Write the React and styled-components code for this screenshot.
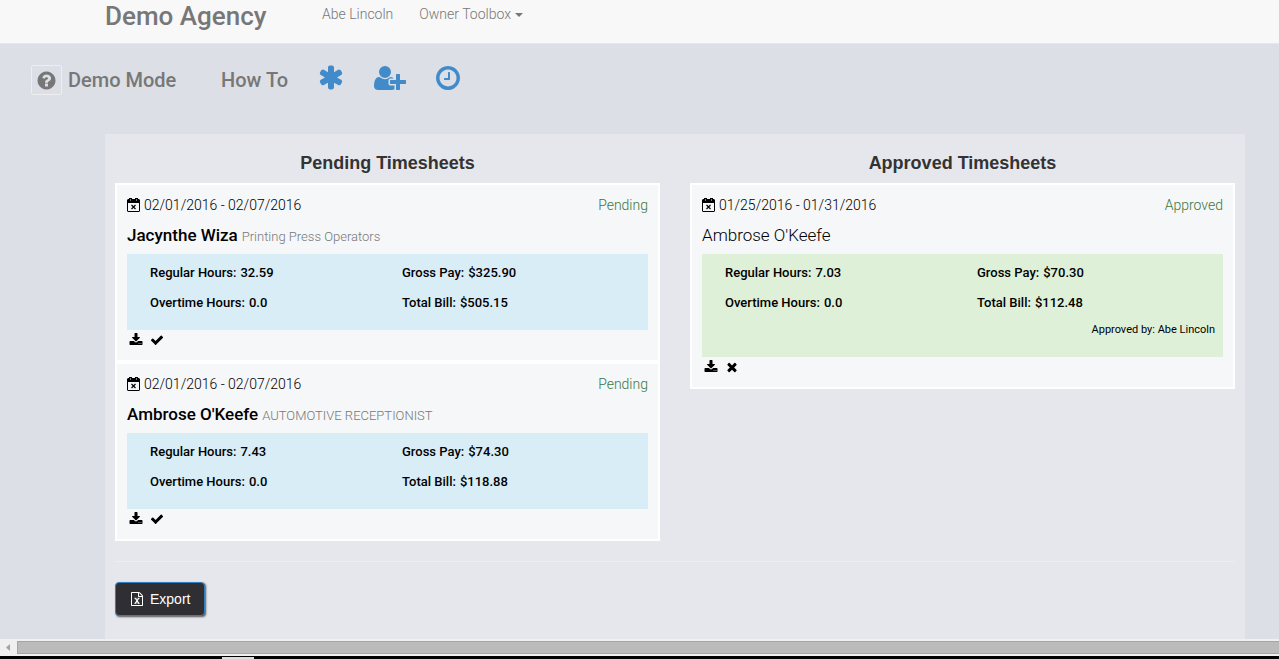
import React from "react";
import styled, { createGlobalStyle } from "styled-components";

const GlobalStyle = createGlobalStyle`
  *, *::before, *::after { box-sizing: border-box; }
  body {
    margin: 0;
    overflow: hidden;
    background: #dcdfe6;
    color: #000;
    font-family: Roboto, "Liberation Sans", sans-serif;
    font-size: 14px;
    line-height: 20px;
  }
  a { color: inherit; text-decoration: none; }
  button { font: inherit; color: inherit; cursor: pointer; }
  h1, h2, h3, p, dl, dd { margin: 0; }
`;

/* ---------- icons ---------- */

const Svg = styled.svg`
  display: block;
  flex: none;
  width: ${(p) => p.$w}px;
  height: ${(p) => p.$h}px;
  fill: currentColor;
`;

const RING =
  "zm384 192q0 209-103 385.5t-279.5 279.5-385.5 103-385.5-103-279.5-279.5-103-385.5 103-385.5 279.5-279.5 385.5-103 385.5 103 279.5 279.5 103 385.5z";

const paths = {
  question:
    "M1024 1376v-192q0-14-9-23t-23-9h-192q-14 0-23 9t-9 23v192q0 14 9 23t23 9h192q14 0 23-9t9-23zm256-672q0-88-55.5-163t-138.5-116-170-41q-243 0-371 213-15 24 8 42l132 100q7 6 19 6 16 0 25-12 53-68 86-92 34-24 86-24 48 0 85.5 26t37.5 59q0 38-20 61t-68 45q-63 28-115.5 86.5t-52.5 125.5v36q0 14 9 23t23 9h192q14 0 23-9t9-23q0-19 21.5-49.5t54.5-49.5q32-18 49-28.5t46-35 44.5-48 28-60.5 12.5-81" +
    RING,
  asterisk:
    "M1482 886q46 26 59.5 77.5t-12.5 97.5l-64 110q-26 46-77.5 59.5t-97.5-12.5l-266-153v307q0 52-38 90t-90 38h-128q-52 0-90-38t-38-90v-307l-266 153q-46 26-97.5 12.5t-77.5-59.5l-64-110q-26-46-12.5-97.5t59.5-77.5l266-154-266-154q-46-26-59.5-77.5t12.5-97.5l64-110q26-46 77.5-59.5t97.5 12.5l266 153v-307q0-52 38-90t90-38h128q52 0 90 38t38 90v307l266-153q46-26 97.5-12.5t77.5 59.5l64 110q26 46 12.5 97.5t-59.5 77.5l-266 154z",
  userPlus:
    "M704 896q-159 0-271.5-112.5t-112.5-271.5 112.5-271.5 271.5-112.5 271.5 112.5 112.5 271.5-112.5 271.5-271.5 112.5zm960 128h352q13 0 22.5 9.5t9.5 22.5v192q0 13-9.5 22.5t-22.5 9.5h-352v352q0 13-9.5 22.5t-22.5 9.5h-192q-13 0-22.5-9.5t-9.5-22.5v-352h-352q-13 0-22.5-9.5t-9.5-22.5v-192q0-13 9.5-22.5t22.5-9.5h352v-352q0-13 9.5-22.5t22.5-9.5h192q13 0 22.5 9.5t9.5 22.5v352zm-736 224q0 52 38 90t90 38h256v238q-68 50-171 50h-874q-121 0-194-69t-73-190q0-53 3.5-103.5t14-109 26.5-108.5 43-97.5 62-81 85.5-53.5 111.5-20q19 0 39 17 79 61 154.5 91.5t164.5 30.5 164.5-30.5 154.5-91.5q20-17 39-17 132 0 217 96h-223q-52 0-90 38t-38 90v192z",
  clock:
    "M1024 544v448q0 14-9 23t-23 9h-320q-14 0-23-9t-9-23v-64q0-14 9-23t23-9h224v-352q0-14 9-23t23-9h64q14 0 23 9t9 23zm416 352q0-148-73-273t-198-198-273-73-273 73-198 198-73 273 73 273 198 198 273 73 273-73 198-198 73-273zm224 0q0 209-103 385.5t-279.5 279.5-385.5 103-385.5-103-279.5-279.5-103-385.5 103-385.5 279.5-279.5 385.5-103 385.5 103 279.5 279.5 103 385.5z",
  download:
    "M1344 1344q0-26-19-45t-45-19-45 19-19 45 19 45 45 19 45-19 19-45zm256 0q0-26-19-45t-45-19-45 19-19 45 19 45 45 19 45-19 19-45zm128-224v320q0 40-28 68t-68 28h-1472q-40 0-68-28t-28-68v-320q0-40 28-68t68-28h465l135 136q58 56 136 56t136-56l136-136h464q40 0 68 28t28 68zm-325-569q17 41-14 70l-448 448q-18 19-45 19t-45-19l-448-448q-31-29-14-70 17-39 59-39h256v-448q0-26 19-45t45-19h256q26 0 45 19t19 45v448h256q42 0 59 39z",
  check:
    "M1671 566q0 40-28 68l-724 724-136 136q-28 28-68 28t-68-28l-136-136-362-362q-28-28-28-68t28-68l136-136q28-28 68-28t68 28l294 295 656-657q28-28 68-28t68 28l136 136q28 28 28 68z",
  times:
    "M1490 1322q0 40-28 68l-136 136q-28 28-68 28t-68-28l-294-294-294 294q-28 28-68 28t-68-28l-136-136q-28-28-28-68t28-68l294-294-294-294q-28-28-28-68t28-68l136-136q28-28 68-28t68 28l294 294 294-294q28-28 68-28t68 28l136 136q28 28 28 68t-28 68l-294 294 294 294q28 28 28 68z",
};

function Icon({ name, size }) {
  const box = name === "userPlus" ? 2048 : 1792;
  const top = name === "asterisk" ? -128 : 0;
  return (
    <Svg $w={Math.round((size * box) / 1792)} $h={size} viewBox={`0 ${top} ${box} 1792`} aria-hidden="true">
      <path d={paths[name]} />
    </Svg>
  );
}

function CalendarIcon() {
  return (
    <Svg $w={14} $h={14} viewBox="0 0 14 14" aria-hidden="true">
      <path fillRule="evenodd" d="M1 1h11l1 1v11l-1 1H1l-1-1V2zM1 5v8h11V5z" />
      <path d="M2 0h3v3H2zM8 0h3v3H8z" />
      <path d="M3 1h1v2H3zM9 1h1v2H9z" fill="#f5f7f9" fillOpacity="0.5" />
      <path d="M4.500 7l4 4M8.500 7l-4 4" stroke="currentColor" strokeWidth="1.200" />
    </Svg>
  );
}

function ExcelIcon() {
  return (
    <Svg $w={14} $h={14} viewBox="0 0 1792 1792" aria-hidden="true">
      <path d="M1596 380q28 28 48 76t20 88v1152q0 40-28 68t-68 28h-1344q-40 0-68-28t-28-68v-1600q0-40 28-68t68-28h896q40 0 88 20t76 48zm-444-244v376h376q-10-29-22-41l-313-313q-12-12-41-22zm384 1528v-1024h-416q-40 0-68-28t-28-68v-416h-768v1536h1280z" />
      <path d="M560 800h260M980 800h260M560 1450h260M980 1450h260" stroke="currentColor" strokeWidth="110" />
      <path d="M690 800l430 650M1110 800l-430 650" stroke="currentColor" strokeWidth="170" />
    </Svg>
  );
}

/* ---------- page frame ---------- */

const Page = styled.div`
  display: flex;
  flex-direction: column;
  height: 100vh;
`;

const Navbar = styled.nav`
  display: flex;
  align-items: flex-start;
  flex: none;
  height: 44px;
  padding-left: 105px;
  background: #f8f8f8;
  border-bottom: 1px solid #e7e7e7;
  color: #777;
`;

const Brand = styled.a`
  width: 217px;
  font-size: 26px;
  line-height: 32px;
  font-weight: 500;
`;

const NavItems = styled.div`
  display: flex;
  gap: 26px;
  padding-top: 4px;
  font-weight: 300;
`;

const Dropdown = styled.button`
  display: flex;
  align-items: center;
  gap: 4px;
  padding: 0;
  border: 0;
  background: none;
  line-height: 20px;
`;

const Caret = styled.span`
  margin-top: 2px;
  border: 4px solid transparent;
  border-top-color: currentColor;
  border-bottom: 0;
`;

const Toolbar = styled.div`
  display: flex;
  align-items: center;
  flex: none;
  height: 72px;
  padding-left: 31px;
  color: #777;
  font-size: 20px;
  font-weight: 500;
`;

const HelpButton = styled.button`
  display: grid;
  place-items: center;
  width: 31px;
  height: 30px;
  padding: 0;
  margin-right: 6px;
  border: 1px solid #eee;
  border-radius: 2px;
  background: none;
`;

const ToolLabel = styled.a`
  width: ${(p) => p.$width}px;
`;

const ToolIcons = styled.div`
  display: flex;
  align-items: center;
  gap: 28px;
  padding-bottom: 4px;
  color: #428bca;
`;

const Main = styled.main`
  flex: 1;
  min-height: 0;
  overflow: hidden;
  padding: 18px 34px 0 105px;
`;

const Panel = styled.div`
  min-height: 100%;
  padding: 15px 10px;
  background: #e6e7ec;
`;

const Columns = styled.div`
  display: grid;
  grid-template-columns: 1fr 1fr;
  gap: 30px;
  align-items: start;
`;

const ColumnTitle = styled.h2`
  height: 34px;
  color: #333;
  font: bold 18px/28px "Liberation Sans", sans-serif;
  text-align: center;
`;

/* ---------- timesheet card ---------- */

const Card = styled.article`
  padding: 10px 10px 12px;
  border: 2px solid #fff;
  background: #f5f7f9;
`;

const CardTop = styled.div`
  display: flex;
  justify-content: space-between;
  font-weight: 300;
`;

const Period = styled.span`
  display: flex;
  align-items: center;
  gap: 3px;
`;

const Status = styled.span`
  color: #3c763d;
`;

const Person = styled.h3`
  display: flex;
  align-items: baseline;
  gap: 4px;
  height: 39px;
  font-size: 17px;
  line-height: 40px;
  font-weight: ${(p) => (p.$light ? 300 : 500)};
`;

const Job = styled.small`
  color: #777;
  font-size: 13px;
  font-weight: 300;
`;

const Summary = styled.div`
  padding: 4px 0 12px 23px;
  background: ${(p) => (p.$approved ? "#dff0d8" : "#d9edf7")};
`;

const Figures = styled.dl`
  display: grid;
  grid-template-columns: 1fr 1fr;
  column-gap: 6px;
  font-size: 13px;
  line-height: 30px;
  font-weight: 500;
`;

const Figure = styled.div`
  display: flex;
  gap: 4px;
`;

const ApprovedBy = styled.p`
  padding: 0 8px 3px 0;
  font-size: 11px;
  line-height: 24px;
  text-align: right;
`;

const Actions = styled.div`
  display: flex;
  gap: 7px;
  padding: 2px 2px 0;
`;

const IconButton = styled.button`
  display: block;
  height: 16px;
  padding: 0;
  border: 0;
  background: none;
`;

const Divider = styled.hr`
  margin: 20px 0;
  border: 0;
  border-top: 1px solid #eee;
`;

const ExportButton = styled.button`
  display: flex;
  align-items: center;
  gap: 6px;
  height: 34px;
  padding: 0 14px;
  border: 1px solid #357ebd;
  border-radius: 4px;
  background: #2f2f33;
  box-shadow: 1px 1px 2px #555;
  color: #fff;
  font: 14px/20px "Liberation Sans", sans-serif;
`;

/* ---------- window chrome under the page ---------- */

const ScrollTrack = styled.div`
  display: flex;
  align-items: center;
  flex: none;
  height: 17px;
  background: #f0f0f0;
`;

const ScrollArrow = styled.span`
  width: 17px;
  padding-left: 6px;
  color: #a3a3a3;
`;

const ScrollThumb = styled.div`
  flex: 1;
  height: 13px;
  border: 1px solid #a6a6a6;
  border-right: 0;
  background: #bbb;
`;

const Taskbar = styled.div`
  flex: none;
  height: 3px;
  padding: 1px 0 0 222px;
  background: #000;
`;

const TaskTab = styled.div`
  width: 32px;
  height: 2px;
  background: #ddd;
`;

const pending = [
  { period: "02/01/2016 - 02/07/2016", name: "Jacynthe Wiza", job: "Printing Press Operators", regular: "32.59", gross: "$325.90", overtime: "0.0", bill: "$505.15" },
  { period: "02/01/2016 - 02/07/2016", name: "Ambrose O'Keefe", job: "AUTOMOTIVE RECEPTIONIST", regular: "7.43", gross: "$74.30", overtime: "0.0", bill: "$118.88" },
];

const approved = [
  { period: "01/25/2016 - 01/31/2016", name: "Ambrose O'Keefe", regular: "7.03", gross: "$70.30", overtime: "0.0", bill: "$112.48", approvedBy: "Abe Lincoln" },
];

function Timesheet({ sheet }) {
  const isApproved = Boolean(sheet.approvedBy);
  const figures = [
    ["Regular Hours:", sheet.regular],
    ["Gross Pay:", sheet.gross],
    ["Overtime Hours:", sheet.overtime],
    ["Total Bill:", sheet.bill],
  ];
  return (
    <Card>
      <CardTop>
        <Period>
          <CalendarIcon />
          {sheet.period}
        </Period>
        <Status>{isApproved ? "Approved" : "Pending"}</Status>
      </CardTop>
      <Person $light={isApproved}>
        <a href="#profile">{sheet.name}</a>
        {sheet.job && <Job>{sheet.job}</Job>}
      </Person>
      <Summary $approved={isApproved}>
        <Figures>
          {figures.map(([label, value]) => (
            <Figure key={label}>
              <dt>{label}</dt>
              <dd>{value}</dd>
            </Figure>
          ))}
        </Figures>
        {isApproved && <ApprovedBy>Approved by: {sheet.approvedBy}</ApprovedBy>}
      </Summary>
      <Actions>
        <IconButton type="button" aria-label="Download">
          <Icon name="download" size={14} />
        </IconButton>
        <IconButton type="button" aria-label={isApproved ? "Reject" : "Approve"}>
          <Icon name={isApproved ? "times" : "check"} size={14} />
        </IconButton>
      </Actions>
    </Card>
  );
}

export default function App() {
  return (
    <Page>
      <GlobalStyle />
      <Navbar>
        <Brand href="#home">Demo Agency</Brand>
        <NavItems>
          <a href="#account">Abe Lincoln</a>
          <Dropdown type="button">
            Owner Toolbox
            <Caret />
          </Dropdown>
        </NavItems>
      </Navbar>
      <Toolbar>
        <HelpButton type="button" aria-label="Help">
          <Icon name="question" size={21} />
        </HelpButton>
        <ToolLabel href="#demo" $width={153}>Demo Mode</ToolLabel>
        <ToolLabel href="#how-to" $width={97}>How To</ToolLabel>
        <ToolIcons>
          <a href="#new" aria-label="New"><Icon name="asterisk" size={28} /></a>
          <a href="#add-user" aria-label="Add user"><Icon name="userPlus" size={28} /></a>
          <a href="#time" aria-label="Time"><Icon name="clock" size={28} /></a>
        </ToolIcons>
      </Toolbar>
      <Main>
        <Panel>
          <Columns>
            <section>
              <ColumnTitle>Pending Timesheets</ColumnTitle>
              {pending.map((s) => <Timesheet key={s.name} sheet={s} />)}
            </section>
            <section>
              <ColumnTitle>Approved Timesheets</ColumnTitle>
              {approved.map((s) => <Timesheet key={s.name} sheet={s} />)}
            </section>
          </Columns>
          <Divider />
          <ExportButton type="button">
            <ExcelIcon />
            Export
          </ExportButton>
        </Panel>
      </Main>
      <ScrollTrack>
        <ScrollArrow>
          <Svg $w={4} $h={7} viewBox="0 0 4 7" aria-hidden="true">
            <path d="M4 0v7L0 3.500z" />
          </Svg>
        </ScrollArrow>
        <ScrollThumb />
      </ScrollTrack>
      <Taskbar>
        <TaskTab />
      </Taskbar>
    </Page>
  );
}
